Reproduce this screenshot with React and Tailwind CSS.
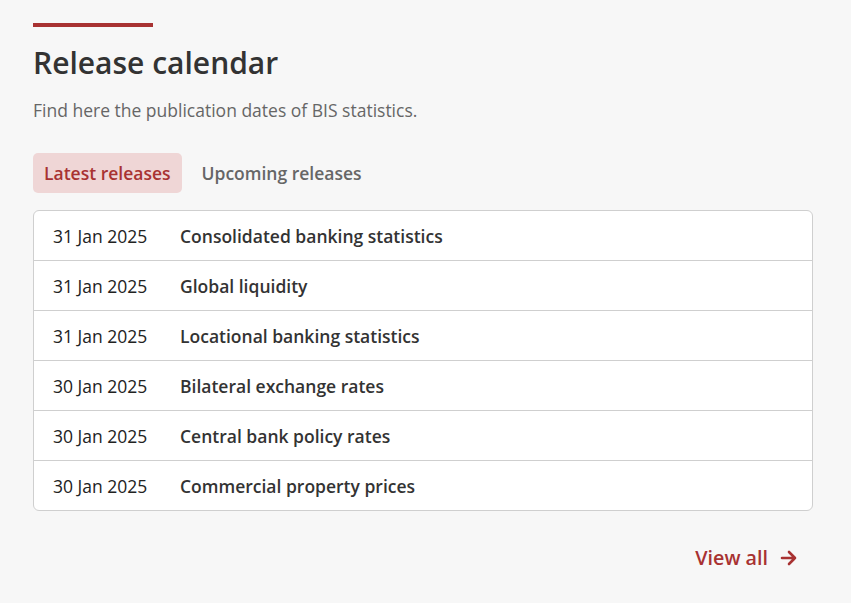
import React from "react";

const releases = [
  ["31 Jan 2025", "Consolidated banking statistics"],
  ["31 Jan 2025", "Global liquidity"],
  ["31 Jan 2025", "Locational banking statistics"],
  ["30 Jan 2025", "Bilateral exchange rates"],
  ["30 Jan 2025", "Central bank policy rates"],
  ["30 Jan 2025", "Commercial property prices"],
];

const App = () => {
  return (
    <div className="min-h-screen bg-[#f7f7f7] font-['Open_Sans',sans-serif] text-[#333]">
      <div className="px-[33px] pt-[23px] w-[813px] box-content">
        <div className="w-[120px] h-[4px] bg-[#a83232]" />
        <h2 className="mt-[16px] text-[30px] leading-[40px] font-semibold text-[#333]">
          Release calendar
        </h2>
        <p className="mt-[15px] text-[17.5px] leading-[24px] text-[#666]">
          Find here the publication dates of BIS statistics.
        </p>

        {/* tabs */}
        <div className="flex gap-[9px] mt-[31px]">
          <button className="h-[40px] px-[11px] rounded-[5px] bg-[#efd6d6] text-[#a83232] text-[17.5px] font-semibold">
            Latest releases
          </button>
          <button className="h-[40px] px-[11px] rounded-[5px] text-[#666] text-[17.5px] font-semibold">
            Upcoming releases
          </button>
        </div>

        {/* list */}
        <div className="mt-[17px] w-[780px] bg-white border border-[#cfcfcf] rounded-[6px]">
          {releases.map(([date, title], i) => (
            <div
              key={i}
              className={`flex items-center px-[19px] pt-[2px] text-[17.5px] ${
                i > 0 ? "h-[50px] border-t border-[#cfcfcf]" : "h-[49px]"
              }`}
            >
              <span className="w-[127px] text-[#222]">{date}</span>
              <span className="font-semibold text-[#333]">{title}</span>
            </div>
          ))}
        </div>

        <div className="flex justify-end w-[780px] mt-[32px] pr-[15px]">
          <a className="flex items-center gap-[12px] text-[19.7px] font-semibold text-[#a83232]">
            View all
            <svg width="18" height="16" viewBox="0 0 18 16" fill="none" stroke="#a83232" strokeWidth="2.6" strokeLinecap="round" strokeLinejoin="round">
              <path d="M2 8h13M9 2l6 6-6 6" />
            </svg>
          </a>
        </div>
      </div>
    </div>
  );
};

export default App;
